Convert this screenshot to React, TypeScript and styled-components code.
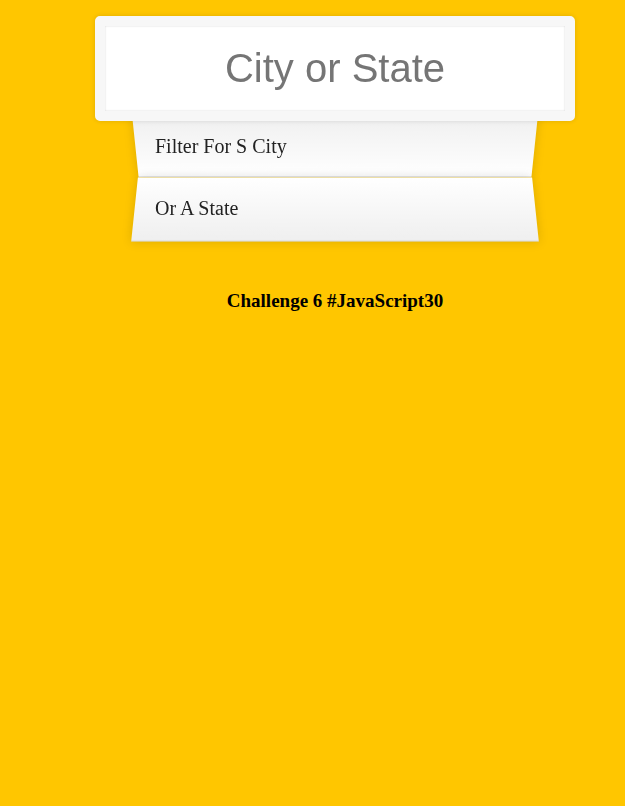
import React from "react";
import styled, { createGlobalStyle } from "styled-components";

const Global = createGlobalStyle`
  html { background: #ffc600; box-sizing: border-box; }
  *, *::before, *::after { box-sizing: inherit; }
  body { margin: 0; font-family: "Liberation Serif", "Times New Roman", serif; font-size: 20px; }
`;

const Page = styled.div`
  display: flex;
  justify-content: center;
  padding: 16px 0 0 45px;
  min-height: 806px;
`;

const Form = styled.form`
  width: 400px;
  display: flex;
  flex-direction: column;
`;

const Search = styled.input`
  position: relative;
  z-index: 2;
  width: 120%;
  margin: 0 0 -10px -10%;
  padding: 20px;
  text-align: center;
  outline: 0;
  border: 10px solid #f7f7f7;
  border-radius: 5px;
  font-family: "Liberation Sans", Arial, sans-serif;
  font-size: 40px;
  color: #333;
  background: #fff;
  box-shadow: 0 0 5px rgba(0, 0, 0, 0.12), inset 0 0 2px rgba(0, 0, 0, 0.19);
  &::placeholder { color: #757575; }
`;

const Suggestions = styled.ul`
  margin: 0;
  padding: 0;
  position: relative;
`;

const Item = styled.li<{ $even: boolean }>`
  position: relative;
  isolation: isolate;
  list-style: none;
  margin: 0;
  padding: ${(p) => (p.$even ? "22px 20px 19px" : "24px 20px 17px")};
  display: flex;
  justify-content: space-between;
  text-transform: capitalize;
  color: #222;
  font-size: 20px;
  line-height: 23px;

  &::before {
    content: "";
    position: absolute;
    inset: 0;
    z-index: -1;
    border-bottom: 1px solid #d8d8d8;
    box-shadow: 0 0 10px rgba(0, 0, 0, 0.14);
    transform: ${(p) =>
      p.$even
        ? "perspective(100px) rotateX(3deg) translateY(2px) scale(1.001)"
        : "perspective(100px) rotateX(-3deg) translateY(3px)"};
    background: ${(p) =>
      p.$even
        ? "linear-gradient(to bottom, #ffffff 0%, #efefef 100%)"
        : "linear-gradient(to top, #ffffff 0%, #efefef 100%)"};
  }
`;

const Title = styled.h4`
  margin: 51px 0 0;
  text-align: center;
  font-size: 19px;
  font-weight: bold;
  color: #000;
`;

export default function App() {
  const items = ["Filter for s city", "or a state"];
  return (
    <>
      <Global />
      <Page>
        <Form onSubmit={(e) => e.preventDefault()}>
          <Search type="text" placeholder="City or State" />
          <Suggestions>
            {items.map((t, i) => (
              <Item key={t} $even={i % 2 === 1}>
                {t}
              </Item>
            ))}
          </Suggestions>
          <Title>Challenge 6 #JavaScript30</Title>
        </Form>
      </Page>
    </>
  );
}
